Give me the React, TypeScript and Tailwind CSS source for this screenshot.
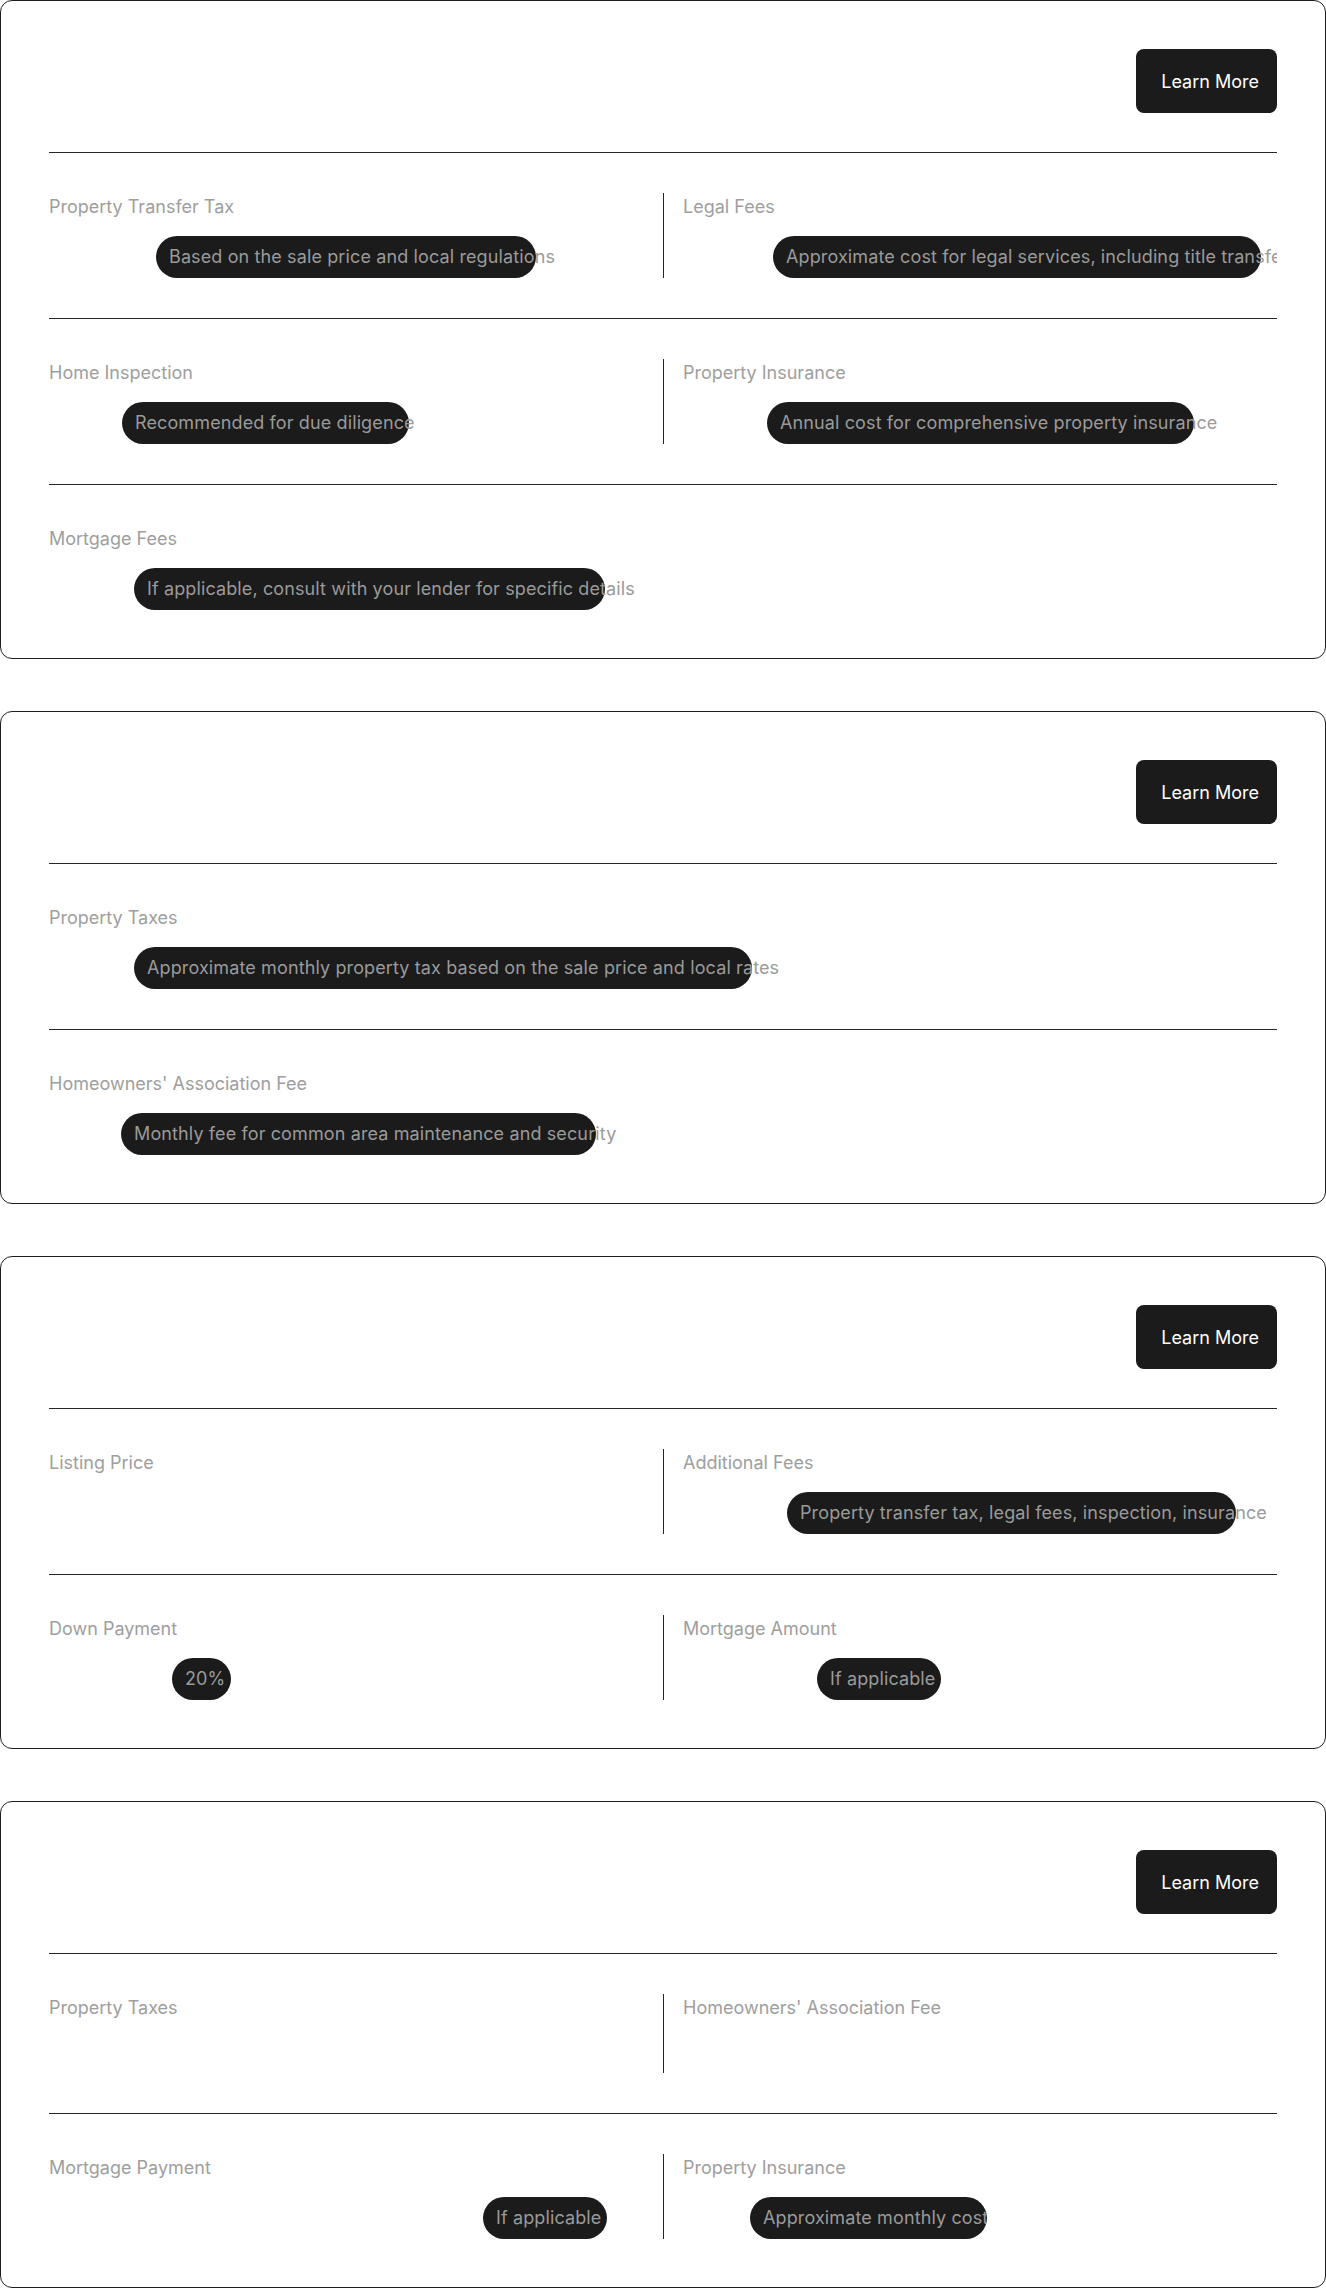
type Item = {
  label: string;
  value?: string;
  pos?: string;
  clip?: boolean;
};

type Card = {
  rows: Item[][];
};

const cards: Card[] = [
  {
    rows: [
      [
        { label: 'Property Transfer Tax', value: 'Based on the sale price and local regulations', pos: 'ml-[107px] w-[380px]' },
        { label: 'Legal Fees', value: 'Approximate cost for legal services, including title transfer', pos: 'ml-[90px] w-[488px]' },
      ],
      [
        { label: 'Home Inspection', value: 'Recommended for due diligence', pos: 'ml-[73px] w-[287px]' },
        { label: 'Property Insurance', value: 'Annual cost for comprehensive property insurance', pos: 'ml-[84px] w-[427px]' },
      ],
      [{ label: 'Mortgage Fees', value: 'If applicable, consult with your lender for specific details', pos: 'ml-[85px] w-[471px]' }],
    ],
  },
  {
    rows: [
      [{ label: 'Property Taxes', value: 'Approximate monthly property tax based on the sale price and local rates', pos: 'ml-[85px] w-[618px]' }],
      [{ label: "Homeowners' Association Fee", value: 'Monthly fee for common area maintenance and security', pos: 'ml-[72px] w-[475px]' }],
    ],
  },
  {
    rows: [
      [
        { label: 'Listing Price' },
        { label: 'Additional Fees', value: 'Property transfer tax, legal fees, inspection, insurance', pos: 'ml-[104px] w-[449px]' },
      ],
      [
        { label: 'Down Payment', value: '20%', pos: 'ml-[123px] w-[59px]' },
        { label: 'Mortgage Amount', value: 'If applicable', pos: 'ml-[134px] w-[124px]' },
      ],
    ],
  },
  {
    rows: [
      [{ label: 'Property Taxes' }, { label: "Homeowners' Association Fee" }],
      [
        { label: 'Mortgage Payment', value: 'If applicable', pos: 'ml-[434px] w-[124px]' },
        { label: 'Property Insurance', value: 'Approximate monthly cost', pos: 'ml-[67px] w-[237px]', clip: true },
      ],
    ],
  },
];

function Field({ item }: { item: Item }) {
  return (
    <div>
      <div className="text-[18px] leading-[28px] text-[#9e9e9e]">{item.label}</div>
      {item.value ? (
        <div
          className={`mt-[15px] h-[42px] rounded-full bg-[#1b1b1b] pl-[13px] text-[18px] leading-[42px] tracking-[0.12px] whitespace-nowrap text-[#9a9a9a] ${item.pos} ${item.clip ? 'overflow-hidden' : ''}`}
        >
          {item.value}
        </div>
      ) : (
        <div className="mt-[15px] h-[36px]" />
      )}
    </div>
  );
}

function CostCard({ card }: { card: Card }) {
  return (
    <div className="rounded-xl border border-[#1f1f1f] bg-white px-12 pt-12 pb-12">
      <div className="flex justify-end">
        <button className="h-[64px] rounded-lg bg-[#1b1b1b] pl-[25px] pr-[18px] text-[18px] text-white">
          Learn More
        </button>
      </div>
      <div className="mt-[39px]">
        {card.rows.map((row, i) => (
          <div
            key={i}
            className={`border-t border-[#262626] pt-10 ${i < card.rows.length - 1 ? 'pb-10' : ''}`}
          >
            {row.length === 2 ? (
              <div className="grid grid-cols-2">
                <Field item={row[0]} />
                <div className="overflow-hidden border-l border-[#262626] pl-[19px]">
                  <Field item={row[1]} />
                </div>
              </div>
            ) : (
              <Field item={row[0]} />
            )}
          </div>
        ))}
      </div>
    </div>
  );
}

export default function App() {
  return (
    <div className="flex flex-col gap-[52px] bg-white" style={{ fontFamily: 'Inter, "Noto Sans", sans-serif' }}>
      {cards.map((card, i) => (
        <CostCard key={i} card={card} />
      ))}
    </div>
  );
}
